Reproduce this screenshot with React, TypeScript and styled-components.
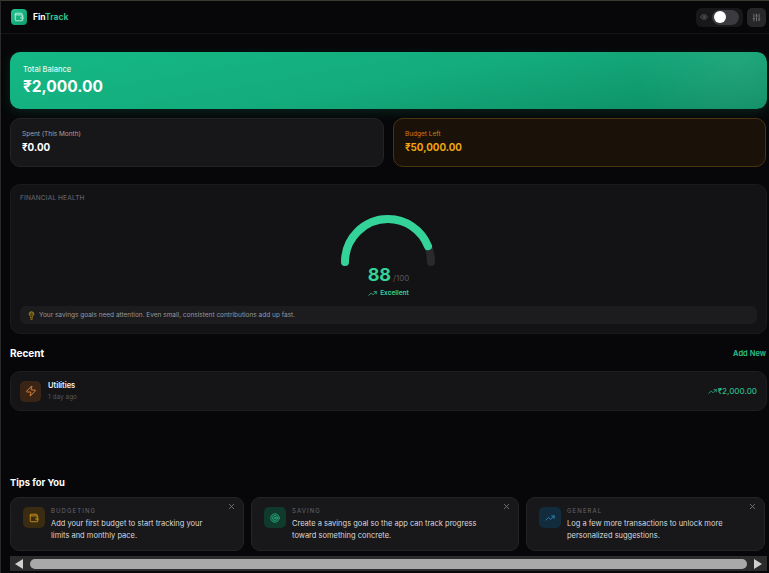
import React from 'react'
import styled, { createGlobalStyle } from 'styled-components'
import { Eye, Lightbulb, SlidersVertical, Target, TrendingUp, Wallet, X, Zap } from 'lucide-react'

const GlobalStyle = createGlobalStyle`
  html, body {
    margin: 0;
    padding: 0;
    background: #070709;
  }
  * {
    box-sizing: border-box;
  }
`

const Page = styled.div`
  width: 769px;
  height: 573px;
  overflow: hidden;
  display: flex;
  flex-direction: column;
  background: #070709;
  border-top: 1px solid #3a3a32;
  border-left: 1px solid #2a2a2a;
  color: #fff;
  font-family: Inter, 'Liberation Sans', sans-serif;
`

const Header = styled.header`
  height: 33px;
  flex: none;
  display: flex;
  align-items: center;
  justify-content: space-between;
  padding: 0 3px 0 10px;
  border-bottom: 1px solid #141416;
`

const Brand = styled.div`
  display: flex;
  align-items: center;
  gap: 6px;
`

const LogoBox = styled.div`
  width: 16px;
  height: 16px;
  border-radius: 4px;
  background: linear-gradient(135deg, #22c58f, #0f9a6c);
  display: flex;
  align-items: center;
  justify-content: center;
  color: #d5f5e8;
`

const BrandName = styled.span`
  font-size: 8.5px;
  font-weight: 700;
  color: #fff;

  em {
    font-style: normal;
    color: #2fc08f;
  }
`

const HeaderTools = styled.div`
  display: flex;
  align-items: center;
  gap: 4px;
`

const TogglePill = styled.div`
  width: 47px;
  height: 19px;
  border-radius: 6px;
  background: #18181b;
  display: flex;
  align-items: center;
  gap: 4px;
  padding-left: 4px;
  color: #6e6e73;
`

const Track = styled.div`
  width: 27px;
  height: 15px;
  border-radius: 7.5px;
  background: #3a3a3f;
  display: flex;
  align-items: center;
  padding-left: 2px;
`

const Knob = styled.div`
  width: 12px;
  height: 12px;
  border-radius: 50%;
  background: #fff;
`

const IconButton = styled.div`
  width: 19px;
  height: 19px;
  border-radius: 5px;
  background: #27272a;
  color: #85858a;
  display: flex;
  align-items: center;
  justify-content: center;
`

const Main = styled.main`
  flex: 1;
  display: flex;
  flex-direction: column;
  padding: 18px 2px 0 9px;
`

const Hero = styled.section`
  height: 57px;
  flex: none;
  border-radius: 10px;
  padding: 12px 13px;
  background:
    radial-gradient(circle at 96% 25%, rgba(255, 255, 255, 0.07), transparent 14%),
    linear-gradient(170deg, #14b985 0%, #14ac7c 50%, #0d8d64 100%);
  box-shadow: 0 3px 12px rgba(16, 185, 129, 0.16);
`

const HeroLabel = styled.div`
  font-size: 7.5px;
  line-height: 12px;
  font-weight: 500;
  color: #e2f7ef;
`

const HeroValue = styled.div`
  margin-top: 1px;
  font-size: 15.5px;
  line-height: 20px;
  font-weight: 700;
  color: #fff;
`

const StatRow = styled.div`
  margin-top: 9px;
  display: grid;
  grid-template-columns: 374px 373px;
  gap: 9px;
`

const StatCard = styled.div<{ $warm?: boolean }>`
  height: 49px;
  border-radius: 10px;
  padding: 10px 11px;
  background: ${(p) => (p.$warm ? '#1a1109' : '#17171a')};
  border: 1px solid ${(p) => (p.$warm ? '#4a3410' : '#232326')};
`

const StatLabel = styled.div<{ $warm?: boolean }>`
  font-size: 6.5px;
  line-height: 10px;
  color: ${(p) => (p.$warm ? '#c9820f' : '#a1a1a6')};
`

const StatValue = styled.div<{ $warm?: boolean }>`
  margin-top: 1px;
  font-size: 9.8px;
  line-height: 15px;
  font-weight: 700;
  color: ${(p) => (p.$warm ? '#eda511' : '#fff')};
`

const HealthCard = styled.section`
  margin-top: 17px;
  height: 150px;
  border-radius: 10px;
  padding: 9px;
  background: #131316;
  border: 1px solid #1a1a1d;
  display: flex;
  flex-direction: column;
`

const HealthTitle = styled.div`
  font-size: 6.5px;
  line-height: 9px;
  font-weight: 500;
  letter-spacing: 0.15px;
  color: #5f5f64;
`

const GaugeWrap = styled.div`
  margin-top: 12px;
  display: flex;
  flex-direction: column;
  align-items: center;
`

const GaugeSvg = styled.svg`
  display: block;
`

const ScoreLine = styled.div`
  display: flex;
  align-items: baseline;
  gap: 2px;
  line-height: 18px;
`

const Score = styled.span`
  font-size: 18px;
  font-weight: 700;
  color: #34d399;
`

const ScoreMax = styled.span`
  font-size: 8px;
  color: #55555a;
`

const ScoreTag = styled.div`
  margin-top: 1px;
  display: flex;
  align-items: center;
  gap: 3px;
  font-size: 6.5px;
  line-height: 10px;
  font-weight: 600;
  color: #34d399;
`

const Advice = styled.div`
  margin-top: 8px;
  height: 18px;
  border-radius: 6px;
  background: #1c1c1f;
  display: flex;
  align-items: center;
  gap: 3px;
  padding: 0 7px;
  font-size: 6.5px;
  color: #97979c;
`

const SectionHead = styled.div`
  margin-top: 13px;
  display: flex;
  align-items: center;
  justify-content: space-between;
  height: 12px;
`

const SectionTitle = styled.h2`
  margin: 0;
  font-size: 10px;
  line-height: 12px;
  font-weight: 700;
  color: #fff;
`

const AddLink = styled.span`
  margin-right: 1px;
  font-size: 7.5px;
  font-weight: 600;
  color: #2cc08c;
`

const TxCard = styled.div`
  margin-top: 12px;
  height: 40px;
  border-radius: 10px;
  padding: 0 9px;
  background: #151518;
  border: 1px solid #1e1e21;
  display: flex;
  align-items: center;
  gap: 7px;
`

const TxIcon = styled.div`
  width: 21px;
  height: 21px;
  border-radius: 5px;
  background: #3a2416;
  color: #d98434;
  display: flex;
  align-items: center;
  justify-content: center;
`

const TxText = styled.div`
  flex: 1;
`

const TxName = styled.div`
  font-size: 7.5px;
  line-height: 11px;
  font-weight: 600;
  color: #f2f2f2;
`

const TxWhen = styled.div`
  margin-top: 1px;
  font-size: 6.5px;
  line-height: 10px;
  color: #55555a;
`

const TxAmount = styled.div`
  display: flex;
  align-items: center;
  gap: 1px;
  font-size: 8px;
  font-weight: 500;
  color: #2cb886;
`

const TipsTitle = styled(SectionTitle)`
  margin-top: 66px;
  font-size: 9.4px;
`

const TipsRow = styled.div`
  margin-top: 8px;
  display: flex;
  gap: 7px;
`

const TipCard = styled.div<{ $width: number }>`
  position: relative;
  width: ${(p) => p.$width}px;
  height: 54px;
  flex: none;
  border-radius: 9px;
  padding: 9px 12px 0 12px;
  background: #18181b;
  border: 1px solid #242427;
  display: flex;
  gap: 6px;
`

const TipIcon = styled.div<{ $bg: string; $fg: string }>`
  width: 22px;
  height: 21px;
  flex: none;
  border-radius: 5px;
  background: ${(p) => p.$bg};
  color: ${(p) => p.$fg};
  display: flex;
  align-items: center;
  justify-content: center;
`

const TipKind = styled.div`
  font-size: 6px;
  line-height: 8px;
  letter-spacing: 1.1px;
  color: #66666b;
`

const TipText = styled.div`
  margin-top: 3px;
  font-size: 7.5px;
  line-height: 12px;
  color: #d8d8dc;
  white-space: nowrap;
`

const Close = styled.span`
  position: absolute;
  top: 4px;
  right: 7px;
  color: #85858a;
  display: flex;
`

const FakeScrollbar = styled.div`
  margin-top: 5px;
  height: 15px;
  display: flex;
  align-items: center;
  background: #2b2b2b;
  padding: 0 5px;
  gap: 7px;
`

const Arrow = styled.div<{ $right?: boolean }>`
  width: 0;
  height: 0;
  flex: none;
  border-top: 5px solid transparent;
  border-bottom: 5px solid transparent;
  ${(p) => (p.$right ? 'border-left: 8px solid #d0d0d0;' : 'border-right: 8px solid #d0d0d0;')}
`

const Thumb = styled.div`
  flex: 1;
  height: 10px;
  border-radius: 5px;
  background: #a9a9a9;
`

const tips = [
  {
    kind: 'BUDGETING',
    width: 234,
    bg: '#3a2c10',
    fg: '#d99a1c',
    Icon: Wallet,
    lines: ['Add your first budget to start tracking your', 'limits and monthly pace.'],
  },
  {
    kind: 'SAVING',
    width: 268,
    bg: '#0f3a2c',
    fg: '#2cb886',
    Icon: Target,
    lines: ['Create a savings goal so the app can track progress', 'toward something concrete.'],
  },
  {
    kind: 'GENERAL',
    width: 239,
    bg: '#122c3e',
    fg: '#2f8fc4',
    Icon: TrendingUp,
    lines: ['Log a few more transactions to unlock more', 'personalized suggestions.'],
  },
]

const App = () => {
  return (
    <Page>
      <GlobalStyle />
      <Header>
        <Brand>
          <LogoBox>
            <Wallet size={10} />
          </LogoBox>
          <BrandName>
            Fin<em>Track</em>
          </BrandName>
        </Brand>
        <HeaderTools>
          <TogglePill>
            <Eye size={8} />
            <Track>
              <Knob />
            </Track>
          </TogglePill>
          <IconButton>
            <SlidersVertical size={9} />
          </IconButton>
        </HeaderTools>
      </Header>
      <Main>
        <Hero>
          <HeroLabel>Total Balance</HeroLabel>
          <HeroValue>₹2,000.00</HeroValue>
        </Hero>
        <StatRow>
          <StatCard>
            <StatLabel>Spent (This Month)</StatLabel>
            <StatValue>₹0.00</StatValue>
          </StatCard>
          <StatCard $warm>
            <StatLabel $warm>Budget Left</StatLabel>
            <StatValue $warm>₹50,000.00</StatValue>
          </StatCard>
        </StatRow>
        <HealthCard>
          <HealthTitle>FINANCIAL HEALTH</HealthTitle>
          <GaugeWrap>
            <GaugeSvg width="100" height="51" viewBox="0 0 100 51">
              <path d="M6 47 A43 43 0 0 1 92 47" fill="none" stroke="#2a2a2d" strokeWidth="8" strokeLinecap="round" />
              <path
                d="M6 47 A43 43 0 0 1 92 47"
                fill="none"
                stroke="#34d399"
                strokeWidth="8"
                strokeLinecap="round"
                pathLength={100}
                strokeDasharray="88 100"
              />
            </GaugeSvg>
            <ScoreLine>
              <Score>88</Score>
              <ScoreMax>/100</ScoreMax>
            </ScoreLine>
            <ScoreTag>
              <TrendingUp size={9} />
              Excellent
            </ScoreTag>
          </GaugeWrap>
          <Advice>
            <Lightbulb size={9} color="#c99a1c" fill="#c99a1c" fillOpacity={0.35} />
            Your savings goals need attention. Even small, consistent contributions add up fast.
          </Advice>
        </HealthCard>
        <SectionHead>
          <SectionTitle>Recent</SectionTitle>
          <AddLink>Add New</AddLink>
        </SectionHead>
        <TxCard>
          <TxIcon>
            <Zap size={12} />
          </TxIcon>
          <TxText>
            <TxName>Utilities</TxName>
            <TxWhen>1 day ago</TxWhen>
          </TxText>
          <TxAmount>
            <TrendingUp size={9} />
            ₹2,000.00
          </TxAmount>
        </TxCard>
        <TipsTitle>Tips for You</TipsTitle>
        <TipsRow>
          {tips.map((tip) => (
            <TipCard key={tip.kind} $width={tip.width}>
              <TipIcon $bg={tip.bg} $fg={tip.fg}>
                <tip.Icon size={10} />
              </TipIcon>
              <div>
                <TipKind>{tip.kind}</TipKind>
                <TipText>
                  {tip.lines[0]}
                  <br />
                  {tip.lines[1]}
                </TipText>
              </div>
              <Close>
                <X size={9} />
              </Close>
            </TipCard>
          ))}
        </TipsRow>
        <FakeScrollbar>
          <Arrow />
          <Thumb />
          <Arrow $right />
        </FakeScrollbar>
      </Main>
    </Page>
  )
}

export default App
